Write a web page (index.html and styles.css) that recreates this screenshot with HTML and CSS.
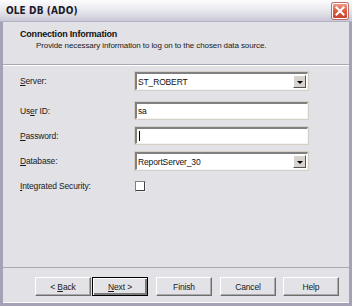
FILE: index.html
```html
<!DOCTYPE html>
<html>
  <head>
    <title>OLE DB (ADO)</title>
    <link rel="stylesheet" href="styles.css">
  </head>
  <body>
    <div class="dialog">
      <header class="title-bar">
        <span class="title-text">OLE DB (ADO)</span>
        <button class="close-button" aria-label="Close">
          <svg viewBox="0 0 10 10" width="10" height="10">
            <path d="M1.5 1.5 L8.5 8.5 M8.5 1.5 L1.5 8.5" stroke="#fff" stroke-width="2" stroke-linecap="square" />
          </svg>
        </button>
      </header>

      <div class="wizard-head">
        <div class="head-title">Connection Information</div>
        <div class="head-sub">Provide necessary information to log on to the chosen data source.</div>
      </div>

      <div class="form">
        <div class="form-row row-server">
          <label><u>S</u>erver:</label>
          <div class="combo">
            <span class="combo-value">ST_ROBERT</span>
            <span class="combo-arrow"></span>
          </div>
        </div>
        <div class="form-row row-user">
          <label>Us<u>e</u>r ID:</label>
          <div class="text-box">sa</div>
        </div>
        <div class="form-row row-pass">
          <label><u>P</u>assword:</label>
          <div class="text-box"><span class="caret"></span></div>
        </div>
        <div class="form-row row-db">
          <label><u>D</u>atabase:</label>
          <div class="combo">
            <span class="combo-value">ReportServer_30</span>
            <span class="combo-arrow"></span>
          </div>
        </div>
        <div class="form-row row-check">
          <label><u>I</u>ntegrated Security:</label>
          <span class="check-box"></span>
        </div>
      </div>

      <div class="button-bar">
        <button class="btn btn-back">&lt; <u>B</u>ack</button>
        <button class="btn btn-next"><u>N</u>ext &gt;</button>
        <button class="btn btn-finish">Finish</button>
        <button class="btn btn-cancel">Cancel</button>
        <button class="btn btn-help">Help</button>
      </div>
    </div>
  </body>
</html>
```

FILE: styles.css
```css
* {
  margin: 0;
  padding: 0;
  box-sizing: border-box;
}

body {
  width: 352px;
  height: 306px;
  background: #e2e1e6;
  font-family: "Liberation Sans", Arial, sans-serif;
  font-size: 9px;
  color: #1a1a1a;
  overflow: hidden;
}

.dialog {
  width: 352px;
  height: 306px;
  display: flex;
  flex-direction: column;
  background: #e2e1e6;
  border-left: 3px solid #a4a2b6;
  border-right: 3px solid #a4a2b6;
  border-bottom: 3px solid #a4a2b6;
}

.title-bar {
  height: 22px;
  margin: 0 -3px;
  display: flex;
  align-items: center;
  justify-content: space-between;
  padding: 0 4px 0 6px;
  background: linear-gradient(180deg, #fdfdfe 0%, #eeeef3 35%, #d9d9e2 75%, #c9c8d6 100%);
  border-bottom: 1px solid #b3b1c3;
}

.title-text {
  font-family: "DejaVu Sans Condensed", "DejaVu Sans", sans-serif;
  font-weight: bold;
  font-size: 10px;
  color: #1b1b2b;
  letter-spacing: 0.1px;
}

.close-button {
  width: 16px;
  height: 16px;
  border: 1px solid #fff;
  border-radius: 2px;
  background: linear-gradient(180deg, #ef9a86 0%, #dc5b42 50%, #c9432f 100%);
  display: flex;
  align-items: center;
  justify-content: center;
  box-shadow: 0 0 0 1px #b86c66;
}

.wizard-head {
  height: 43px;
  padding: 7px 0 0 17px;
  border-bottom: 1px solid #a8a7b4;
  box-shadow: 0 1px 0 #ffffff;
}

.head-title {
  font-weight: bold;
  font-size: 9px;
  color: #111;
  letter-spacing: -0.2px;
}

.head-sub {
  margin: 2px 0 0 16px;
  font-size: 8px;
  color: #1a1a1a;
  letter-spacing: -0.1px;
}

.form {
  flex: 1;
  display: flex;
  flex-direction: column;
  padding: 7px 0 0 17px;
}

.form-row {
  display: flex;
  align-items: center;
  height: 18px;
}

.form-row label {
  width: 115px;
  font-size: 8.5px;
  letter-spacing: -0.15px;
  color: #1a1a1a;
}

.row-user { margin-top: 12px; height: 17px; }
.row-pass { margin-top: 8px; height: 17px; }
.row-db { margin-top: 8px; }
.row-check { margin-top: 10px; height: 12px; }

.combo,
.text-box {
  width: 173px;
  height: 100%;
  display: flex;
  align-items: center;
  background: #fff;
  border-top: 2px solid #808080;
  border-left: 2px solid #808080;
  border-right: 1px solid #f4f4f4;
  border-bottom: 1px solid #f4f4f4;
  box-shadow: 0 0 0 1px #d4d0c8;
  font-size: 8.5px;
  letter-spacing: -0.15px;
  padding-left: 1px;
  color: #111;
}

.combo-value {
  flex: 1;
}

.combo-arrow {
  width: 13px;
  height: 13px;
  margin-right: 1px;
  background: #d6d3ce;
  border: 1px solid #fff;
  border-right-color: #555;
  border-bottom-color: #555;
  position: relative;
}

.combo-arrow::after {
  content: "";
  position: absolute;
  left: 3px;
  top: 5px;
  border-left: 3px solid transparent;
  border-right: 3px solid transparent;
  border-top: 3px solid #000;
}

.caret {
  width: 1px;
  height: 10px;
  background: #000;
  margin-left: 1px;
}

.check-box {
  width: 11px;
  height: 11px;
  background: #fff;
  border-top: 1px solid #808080;
  border-left: 1px solid #808080;
  border-right: 1px solid #f0f0f0;
  border-bottom: 1px solid #f0f0f0;
  box-shadow: -1px -1px 0 0 #404040 inset;
}

.button-bar {
  height: 36px;
  display: flex;
  align-items: flex-start;
  padding: 9px 0 0 32px;
  border-top: 1px solid #a8a7b4;
  box-shadow: 0 -1px 0 #fbfbfd inset;
}

.btn {
  width: 56px;
  height: 19px;
  font-family: "Liberation Sans", Arial, sans-serif;
  font-size: 8.5px;
  letter-spacing: -0.15px;
  color: #1a1a1a;
  background: #e3e2e7;
  border: 1px solid #fff;
  border-right-color: #6e6e6e;
  border-bottom-color: #6e6e6e;
  box-shadow: inset -1px -1px 0 #a9a8ad;
}

.btn-next {
  margin-left: 1px;
  border: 1px solid #000;
  box-shadow: inset 1px 1px 0 #fff, inset -2px -2px 0 #7b7b7b;
}

.btn-finish { margin-left: 8px; }
.btn-cancel { margin-left: 8px; }
.btn-help { margin-left: 7px; }
```
